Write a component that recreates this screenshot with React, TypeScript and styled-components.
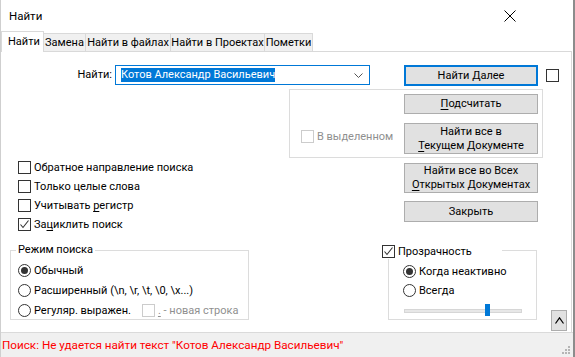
import React from "react";
import styled, { createGlobalStyle } from "styled-components";

const Global = createGlobalStyle`
  html, body { margin: 0; padding: 0; background: #fff; }
  body {
    font-family: Roboto, "Liberation Sans", sans-serif;
    font-size: 11px;
    color: #000;
  }
  u { text-underline-offset: 2px; }
`;

const Window = styled.div`
  width: 575px;
  height: 357px;
  box-sizing: border-box;
  border-left: 1px solid #cfcfcf;
  border-right: 2px solid #8c8c8c;
  background: #fff;
  display: flex;
  flex-direction: column;
  overflow: hidden;
`;

const TitleBar = styled.div`
  height: 31px;
  flex: none;
  display: flex;
  align-items: center;
  justify-content: space-between;
  padding-left: 8px;
  font-size: 11.5px;
`;

const CloseBtn = styled.div`
  width: 46px;
  height: 31px;
  margin-right: 40px;
  display: flex;
  align-items: center;
  justify-content: center;
`;

const TabRow = styled.div`
  height: 20px;
  flex: none;
  display: flex;
  align-items: flex-end;
  position: relative;
  z-index: 1;
`;

const Tab = styled.div<{ $active?: boolean; $w: number }>`
  box-sizing: border-box;
  width: ${(p) => p.$w}px;
  height: ${(p) => (p.$active ? "21px" : "18px")};
  margin-bottom: ${(p) => (p.$active ? "-1px" : "0")};
  padding: ${(p) => (p.$active ? "0 0 2px 6px" : "0")};
  border: 1px solid #d9d9d9;
  border-bottom: none;
  margin-left: -1px;
  background: ${(p) => (p.$active ? "#fff" : "#f0f0f0")};
  display: flex;
  align-items: center;
  justify-content: ${(p) => (p.$active ? "flex-start" : "center")};
  white-space: nowrap;
  &:first-child { margin-left: 0; }
`;

const Panel = styled.div`
  flex: 1;
  border-top: 1px solid #d9d9d9;
  border-right: 1px solid #d9d9d9;
  margin-right: 1px;
  padding-top: 13px;
  display: flex;
  flex-direction: column;
`;

const FindRow = styled.div`
  display: flex;
  align-items: flex-start;
  height: 21px;
`;

const FieldLabel = styled.div`
  width: 111px;
  height: 20px;
  line-height: 19px;
  text-align: right;
`;

const Combo = styled.div`
  box-sizing: border-box;
  width: 255px;
  height: 20px;
  margin-left: 3px;
  border: 1px solid #0078d7;
  display: flex;
  align-items: center;
  padding: 0 6px 0 5px;
`;

const Selected = styled.span`
  background: #0078d7;
  color: #fff;
  line-height: 14px;
  height: 14px;
  white-space: nowrap;
`;

const Chevron = styled.svg`
  margin-left: auto;
`;

const Button = styled.div<{ $w?: number; $h: number; $default?: boolean }>`
  box-sizing: border-box;
  width: ${(p) => p.$w ?? 134}px;
  height: ${(p) => p.$h}px;
  background: #e1e1e1;
  border: ${(p) => (p.$default ? "2px solid #0078d7" : "1px solid #adadad")};
  display: flex;
  align-items: center;
  justify-content: center;
  text-align: center;
  line-height: 14px;
  flex: none;
`;

const Box = styled.div<{ $disabled?: boolean }>`
  box-sizing: border-box;
  width: 13px;
  height: 13px;
  flex: none;
  border: 1px solid ${(p) => (p.$disabled ? "#cccccc" : "#333")};
  background: #fff;
  display: flex;
  align-items: center;
  justify-content: center;
`;

const Radio = styled.div<{ $on?: boolean }>`
  box-sizing: border-box;
  width: 13px;
  height: 13px;
  flex: none;
  border-radius: 50%;
  border: 1px solid #333;
  background: #fff;
  display: flex;
  align-items: center;
  justify-content: center;
  &::after {
    content: "";
    width: 7px;
    height: 7px;
    border-radius: 50%;
    background: ${(p) => (p.$on ? "#333" : "transparent")};
  }
`;

const Option = styled.div<{ $h?: number; $disabled?: boolean }>`
  display: flex;
  align-items: center;
  gap: 3px;
  height: ${(p) => p.$h ?? 19}px;
  white-space: nowrap;
  color: ${(p) => (p.$disabled ? "#8f8f8f" : "#000")};
`;

const ScopeRow = styled.div`
  margin-top: 3px;
  display: flex;
`;

const ScopeGroup = styled.div`
  box-sizing: border-box;
  margin-left: 288px;
  width: 254px;
  height: 69px;
  border: 1px solid #dcdcdc;
  padding-top: 4px;
  display: grid;
  grid-template-columns: 114px 134px;
  grid-template-rows: 20px 31px;
  row-gap: 9px;
`;

const ScopeCheck = styled.div`
  grid-column: 1;
  grid-row: 2;
  padding-left: 11px;
  padding-top: 4px;
`;

const OptionsRow = styled.div`
  display: flex;
  height: 92px;
`;

const CheckList = styled.div`
  width: 386px;
  padding-left: 17px;
  display: flex;
  flex-direction: column;
`;

const ButtonStack = styled.div`
  padding-top: 5px;
  display: flex;
  flex-direction: column;
  gap: 8px;
`;

const BottomRow = styled.div`
  flex: 1;
  display: flex;
  align-items: flex-start;
`;

const Group = styled.div<{ $ml: number; $w: number }>`
  position: relative;
  box-sizing: border-box;
  margin-left: ${(p) => p.$ml}px;
  width: ${(p) => p.$w}px;
  height: 70px;
  border: 1px solid #dcdcdc;
  display: flex;
  flex-direction: column;
`;

const Legend = styled.div<{ $left: number; $top: number }>`
  position: absolute;
  left: ${(p) => p.$left}px;
  top: ${(p) => p.$top}px;
  background: #fff;
  line-height: 16px;
  white-space: nowrap;
`;

const TextLegend = styled(Legend)`
  padding: 0 2px;
`;

const CheckLegend = styled(Legend)`
  width: 120px;
  height: 13px;
  display: flex;
  align-items: center;
  gap: 3px;
  padding-bottom: 1px;
`;

const RadioList = styled.div<{ $pl: number; $pt: number; $h: number }>`
  padding-left: ${(p) => p.$pl}px;
  padding-top: ${(p) => p.$pt}px;
  display: flex;
  flex-direction: column;
  & > div { height: ${(p) => p.$h}px; }
`;

const NewlineCheck = styled.div`
  display: flex;
  align-items: center;
  gap: 3px;
  margin-left: 8px;
  color: #8f8f8f;
`;

const Slider = styled.div`
  position: relative;
  margin: 9px 0 0 15px;
  width: 118px;
  height: 4px;
  box-sizing: border-box;
  background: #e7e7e7;
  border: 1px solid #d6d6d6;
`;

const Thumb = styled.div`
  position: absolute;
  top: -6px;
  width: 5px;
  height: 12px;
  background: #0078d7;
`;

const CollapseBtn = styled.div`
  box-sizing: border-box;
  align-self: flex-end;
  margin: 0 0 1px 14px;
  width: 16px;
  height: 21px;
  background: #e1e1e1;
  border: 1px solid #adadad;
  display: flex;
  align-items: center;
  justify-content: center;
`;

const StatusBar = styled.div`
  height: 25px;
  flex: none;
  box-sizing: border-box;
  border-top: 1px solid #dadada;
  background: #f0f0f0;
  color: #ff0000;
  font-size: 11.7px;
  display: flex;
  align-items: center;
  padding: 0 2px 1px 1px;
  white-space: nowrap;
`;

const Grip = styled.svg`
  margin-left: auto;
  align-self: flex-end;
  margin-bottom: 1px;
`;

const Check = () => (
  <svg width="11" height="11" viewBox="0 0 11 11">
    <polyline points="1.5,5.5 4,8.5 9.5,1.5" fill="none" stroke="#333" strokeWidth="1.1" />
  </svg>
);

function CheckOption({ checked, children }: { checked?: boolean; children: React.ReactNode }) {
  return (
    <Option>
      <Box>{checked && <Check />}</Box>
      <span>{children}</span>
    </Option>
  );
}

const tabs = [
  { label: "Найти", w: 43, active: true },
  { label: "Замена", w: 43 },
  { label: "Найти в файлах", w: 86 },
  { label: "Найти в Проектах", w: 95 },
  { label: "Пометки", w: 49 },
];

export default function App() {
  const thumbPos = 80;
  return (
    <>
      <Global />
      <Window>
        <TitleBar>
          <span>Найти</span>
          <CloseBtn>
            <svg width="12" height="12" viewBox="0 0 12 12">
              <path d="M0.5 0.5 L11.5 11.5 M11.5 0.5 L0.5 11.5" stroke="#000" strokeWidth="1" />
            </svg>
          </CloseBtn>
        </TitleBar>

        <TabRow>
          {tabs.map((t) => (
            <Tab key={t.label} $active={t.active} $w={t.w}>{t.label}</Tab>
          ))}
        </TabRow>

        <Panel>
          <FindRow>
            <FieldLabel>Найти:</FieldLabel>
            <Combo>
              <Selected>Котов Александр Васильевич</Selected>
              <Chevron width="9" height="5" viewBox="0 0 9 5">
                <polyline points="0.5,0.5 4.5,4.5 8.5,0.5" fill="none" stroke="#555" />
              </Chevron>
            </Combo>
            <Button $default $h={21} style={{ marginLeft: 34 }}>Найти Далее</Button>
            <Box style={{ marginLeft: 8, marginTop: 4 }} />
          </FindRow>

          <ScopeRow>
            <ScopeGroup>
              <Button $h={20} style={{ gridColumn: 2, gridRow: 1 }}>
                <span><u>П</u>одсчитать</span>
              </Button>
              <ScopeCheck>
                <Option $disabled>
                  <Box $disabled />
                  <span>В выделенном</span>
                </Option>
              </ScopeCheck>
              <Button $h={31} style={{ gridColumn: 2, gridRow: 2 }}>
                <span>Найти все в<br /><u>Т</u>екущем Документе</span>
              </Button>
            </ScopeGroup>
          </ScopeRow>

          <OptionsRow>
            <CheckList>
              <CheckOption>Обратное направление поиска</CheckOption>
              <CheckOption>Только целые слова</CheckOption>
              <CheckOption>Учитывать <u>р</u>егистр</CheckOption>
              <CheckOption checked>За<u>ц</u>иклить поиск</CheckOption>
            </CheckList>
            <ButtonStack>
              <Button $h={30}>
                <span>Найти все во Всех<br /><u>О</u>ткрытых Документах</span>
              </Button>
              <Button $h={21}>Закрыть</Button>
            </ButtonStack>
          </OptionsRow>

          <BottomRow>
            <Group $ml={9} $w={239}>
              <TextLegend $left={5} $top={-9}>Режим поиска</TextLegend>
              <RadioList $pl={7} $pt={9} $h={20}>
                <Option><Radio $on /><span>Обычный</span></Option>
                <Option><Radio /><span>Расширенный (\n, \r, \t, \0, \x...)</span></Option>
                <Option>
                  <Radio />
                  <span>Регуляр. выражен.</span>
                  <NewlineCheck>
                    <Box $disabled />
                    <span><u>.</u> - новая строка</span>
                  </NewlineCheck>
                </Option>
              </RadioList>
            </Group>

            <Group $ml={139} $w={149}>
              <CheckLegend $left={-7} $top={-6}>
                <Box><Check /></Box>
                <span>Прозрачность</span>
              </CheckLegend>
              <RadioList $pl={14} $pt={11} $h={19}>
                <Option><Radio $on /><span>Когда неактивно</span></Option>
                <Option><Radio /><span>Всегда</span></Option>
              </RadioList>
              <Slider>
                <Thumb style={{ left: thumbPos }} />
              </Slider>
            </Group>

            <CollapseBtn>
              <svg width="9" height="7" viewBox="0 0 9 7">
                <polyline points="0.5,6.5 4.5,0.8 8.5,6.5" fill="none" stroke="#000" strokeWidth="1.2" />
              </svg>
            </CollapseBtn>
          </BottomRow>
        </Panel>

        <StatusBar>
          <span>Поиск: Не удается найти текст "Котов Александр Васильевич"</span>
          <Grip width="9" height="9" viewBox="0 0 9 9">
            <g fill="#b5b5b5">
              <rect x="6" y="0" width="2" height="2" />
              <rect x="3" y="3" width="2" height="2" />
              <rect x="6" y="3" width="2" height="2" />
              <rect x="0" y="6" width="2" height="2" />
              <rect x="3" y="6" width="2" height="2" />
              <rect x="6" y="6" width="2" height="2" />
            </g>
          </Grip>
        </StatusBar>
      </Window>
    </>
  );
}
